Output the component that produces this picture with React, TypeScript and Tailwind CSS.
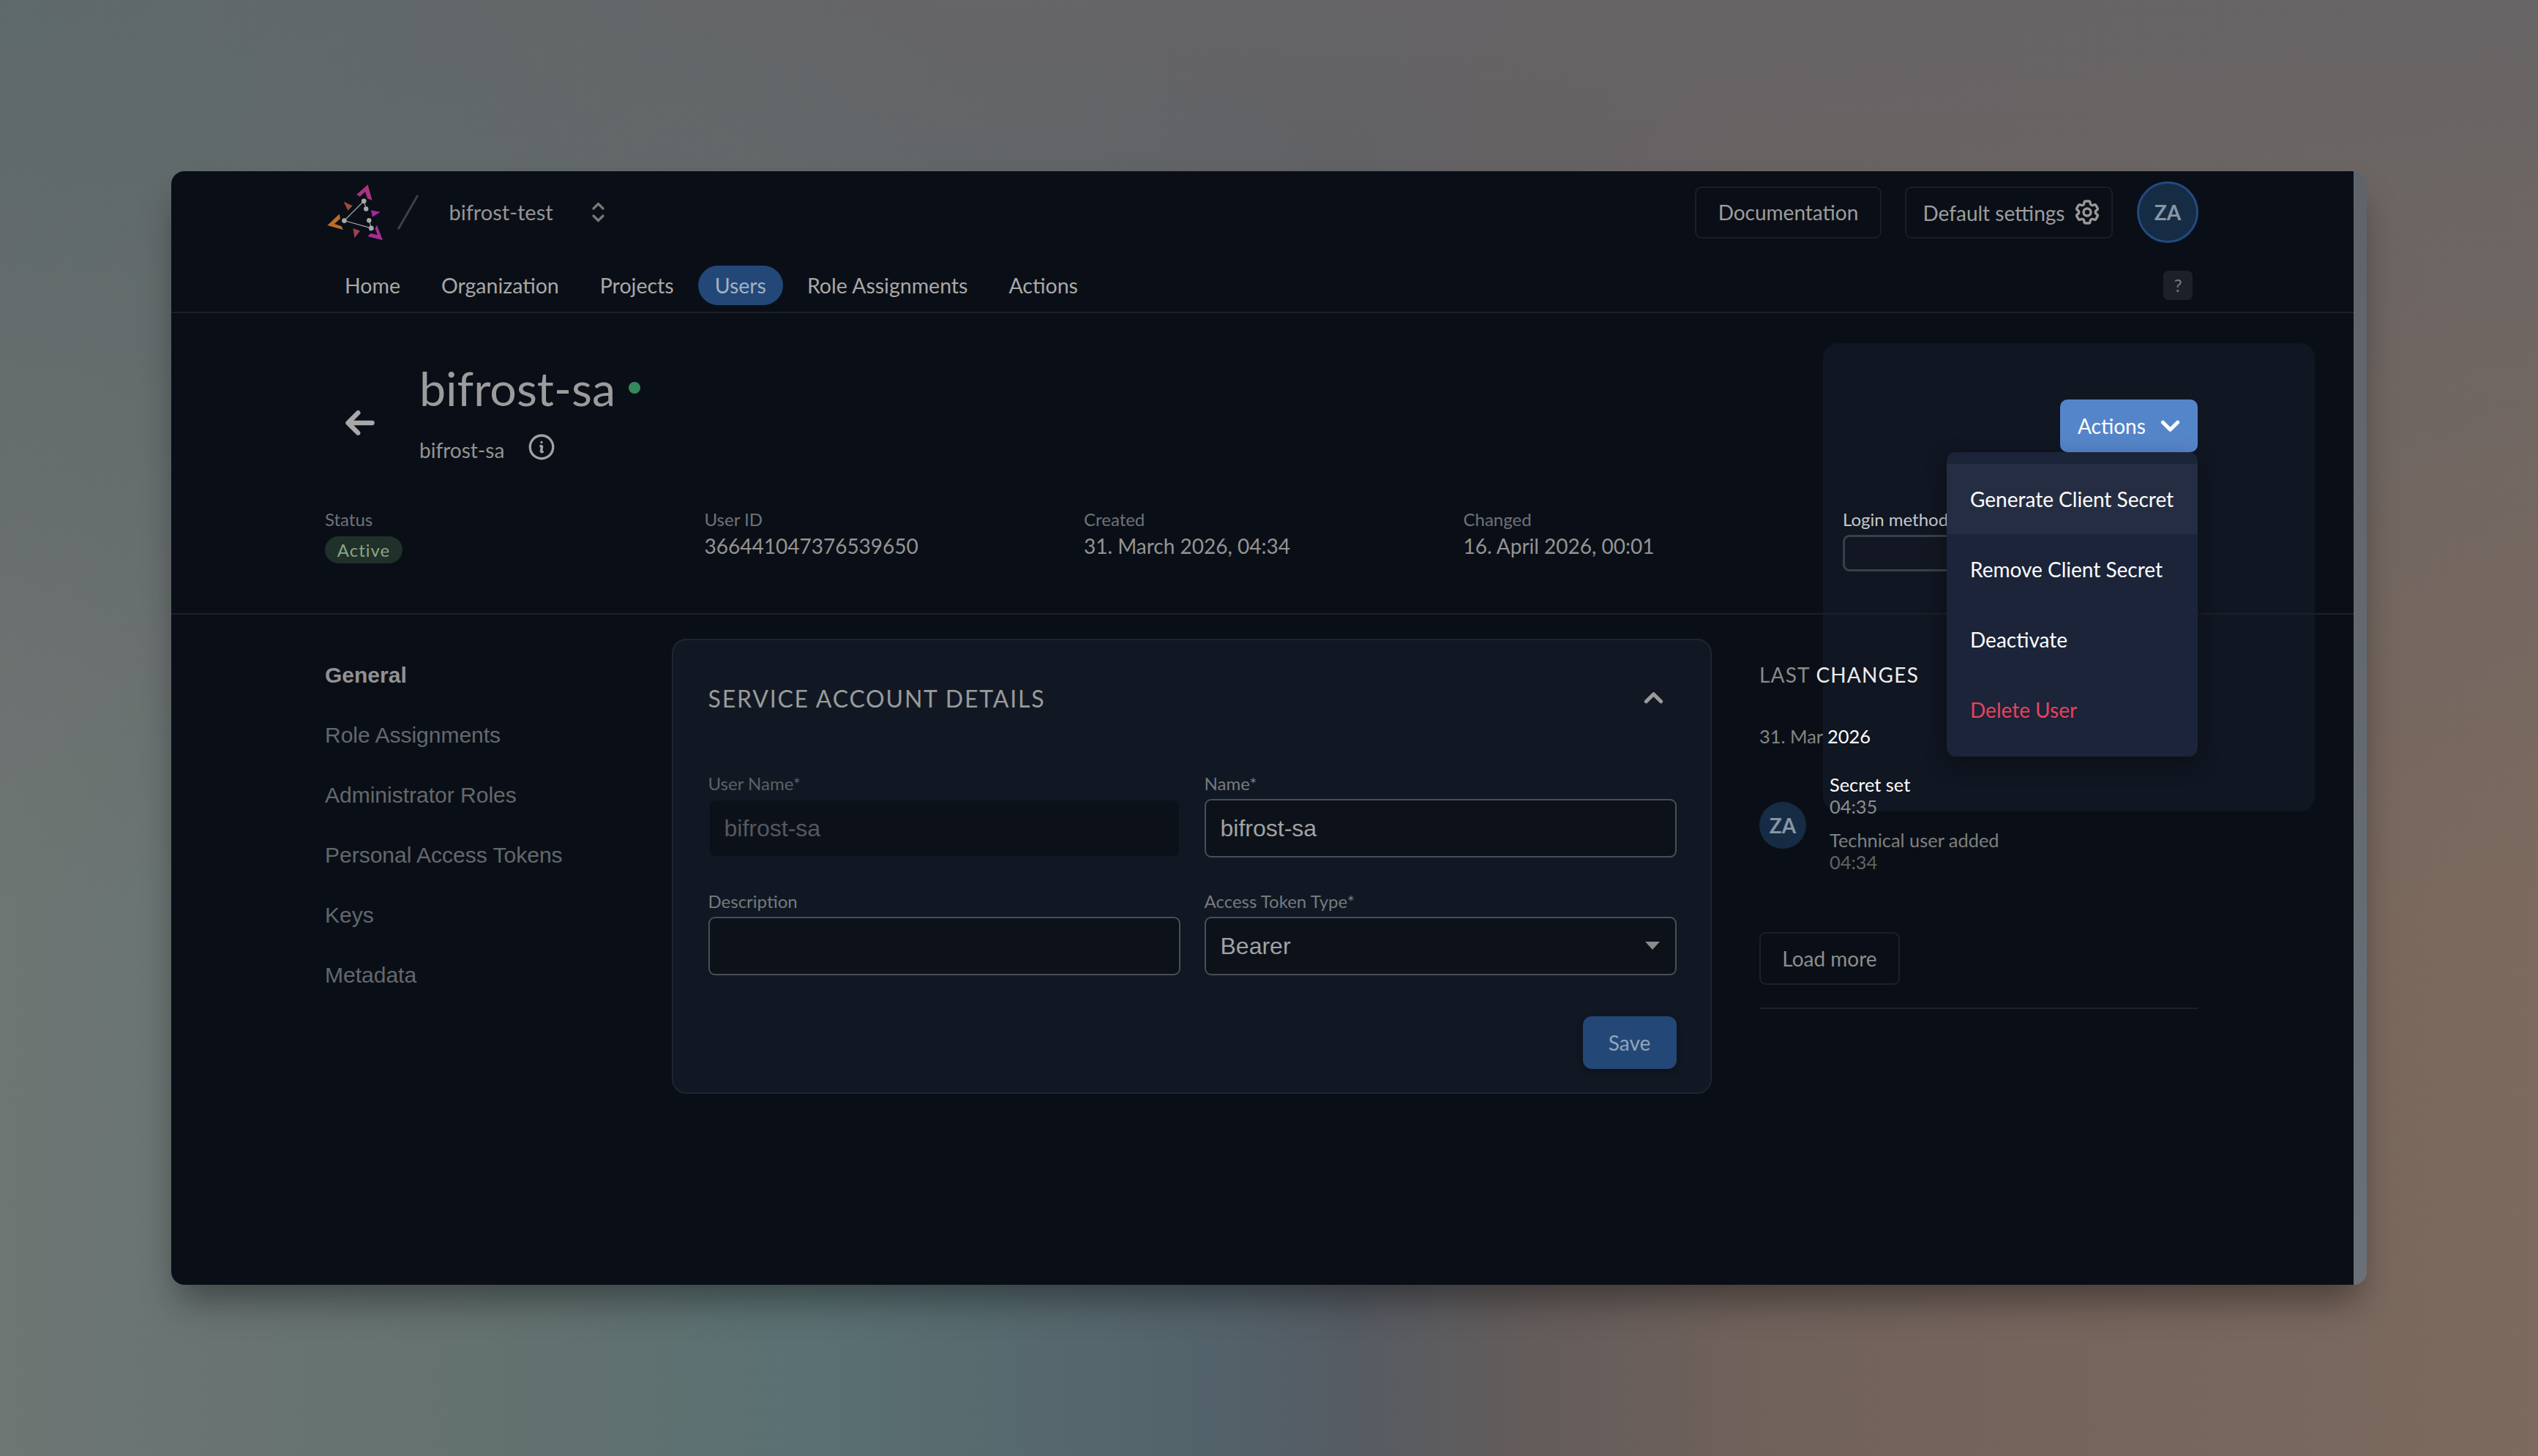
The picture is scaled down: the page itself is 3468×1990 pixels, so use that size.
import React from 'react';
import { HiOutlineCog6Tooth, HiOutlineInformationCircle, HiArrowLeft } from 'react-icons/hi2';

const lato = 'font-["Lato","Noto_Sans",sans-serif]';

function Logo() {
  return (
    <svg viewBox="78 65 230 230" className="w-[77px] h-[77px] shrink-0">
      <polygon points="198,107 244,66 262,130 243,123 233,95 212,115" fill="#a9347f" />
      <polygon points="145,135 182,152 163,172" fill="#9e4a3c" />
      <polygon points="128,186 79,232 143,250 137,236 108,226 132,205" fill="#bf6c2a" />
      <polygon points="184,245 212,255 190,284" fill="#a33f55" />
      <polygon points="281,231 305,293 243,277 256,265 284,272 274,246" fill="#a62e94" />
      <polygon points="257,170 295,178 263,198" fill="#a3289b" />
      <g stroke="#a9a9a9" strokeWidth="3.5" fill="none">
        <path d="M228 133 L148 213 L258 244 L249 212" />
        <path d="M228 133 L237 165" />
      </g>
      <g fill="#a9a9a9">
        <circle cx="228" cy="133" r="10" />
        <circle cx="237" cy="165" r="9.5" />
        <circle cx="148" cy="213" r="10" />
        <circle cx="249" cy="212" r="9.5" />
        <circle cx="258" cy="244" r="10" />
      </g>
    </svg>
  );
}

function UpDown() {
  return (
    <svg viewBox="0 0 17 28" className="w-[17px] h-[28px] ml-[53px] shrink-0" fill="none" stroke="#787878" strokeWidth="3.2" strokeLinecap="round" strokeLinejoin="round">
      <path d="M2 9 L8.5 2.5 L15 9" />
      <path d="M2 19 L8.5 25.5 L15 19" />
    </svg>
  );
}

function Chevron({ up, color, w }: { up?: boolean; color: string; w: string }) {
  return (
    <svg viewBox="0 0 25 16" className={w} fill="none" stroke={color} strokeWidth="4.8" strokeLinecap="round" strokeLinejoin="round">
      <path d={up ? 'M3 13 L12.5 3.5 L22 13' : 'M3 3 L12.5 12.5 L22 3'} />
    </svg>
  );
}

const navItems = ['Home', 'Organization', 'Projects', 'Users', 'Role Assignments', 'Actions'];
const sideItems = ['Role Assignments', 'Administrator Roles', 'Personal Access Tokens', 'Keys', 'Metadata'];

function Stat({ label, value }: { label: string; value: string }) {
  return (
    <div>
      <div className="text-[24px] leading-[36px] text-[#6f7277]">{label}</div>
      <div className="text-[28px] leading-[34px] mt-[1px] text-[#949494]">{value}</div>
    </div>
  );
}

function Field({ label, value, dim }: { label: string; value?: string; dim?: boolean }) {
  return (
    <div>
      <div className={`text-[24px] leading-[40px] h-[41px] ${dim ? 'text-[#5c6066]' : 'text-[#777a7e]'}`}>{label}</div>
      <input
        readOnly
        value={value ?? ''}
        className={`block w-full h-[80px] rounded-[9px] border-[2.5px] px-[20px] outline-none text-[32px] font-["Liberation_Sans",sans-serif] bg-clip-padding ${
          dim ? 'border-transparent bg-[#0c1119] text-[#55585d]' : 'border-[#4a4e54] bg-[#0c111a] text-[#a2a2a2]'
        }`}
      />
    </div>
  );
}

const menuItems = [
  { t: 'Generate Client Secret', cls: 'bg-[#252d42] text-white' },
  { t: 'Remove Client Secret', cls: 'text-white' },
  { t: 'Deactivate', cls: 'text-white' },
  { t: 'Delete User', cls: 'text-[#e8425a]' },
];

export default function App() {
  return (
    <div className={`w-full h-screen overflow-hidden pt-[234px] pl-[234px] ${lato} bg-[radial-gradient(ellipse_1300px_900px_at_0%_0%,rgba(90,108,110,0.65),rgba(90,108,110,0)),linear-gradient(180deg,rgba(102,100,102,0.95)_0%,rgba(102,100,102,0.7)_14%,rgba(102,100,102,0)_62%),linear-gradient(90deg,#6e7674_0%,#62716f_21%,#5a7072_32%,#53626a_48%,#555b63_53%,#635c5b_60%,#70615b_69%,#7c6a5e_100%)]`}>
      <div className="relative w-[3000px] h-[1522px] flex rounded-[18px] bg-[linear-gradient(180deg,#5f646b_0%,#6a7077_100%)] shadow-[0_30px_50px_-10px_rgba(0,0,0,0.4)]">
        <div className="relative w-[2982px] h-full rounded-l-[18px] bg-[#0a0f17] overflow-hidden">
          {/* Spotlight behind the open menu */}
          <div className="absolute left-[2257px] top-[235px] w-[672px] h-[640px] rounded-[20px] bg-[#101622]" />

          <div className="relative">
            <header className="h-[194px] border-b-[2px] border-[#1b1f28] pl-[210px] pr-[212px] pt-[14px]">
              <div className="flex items-center h-[84px]">
                <div className="ml-[3px] flex items-center">
                  <Logo />
                  <div className="w-[2.5px] h-[54px] ml-[32px] bg-[#3d4046] rotate-[30deg] rounded-full" />
                  <span className="ml-[55px] text-[29px] text-[#959595]">bifrost-test</span>
                  <UpDown />
                </div>
                <div className="ml-auto flex items-center">
                  <div className="h-[71px] w-[255px] flex items-center justify-center rounded-[9px] border-[2.5px] border-[#1a1e27] text-[28px] text-[#9d9d9d]">
                    Documentation
                  </div>
                  <div className="ml-[32px] h-[71px] w-[284px] flex items-center pl-[22.5px] gap-[11px] rounded-[9px] border-[2.5px] border-[#1a1e27] text-[28px] text-[#9d9d9d]">
                    <span className="mt-[2px]">Default settings</span>
                    <HiOutlineCog6Tooth strokeWidth={2} className="w-[40px] h-[40px] text-[#9a9a9a]" />
                  </div>
                  <div className="ml-[33px] w-[84px] h-[84px] rounded-full bg-[#152c44] border-[3.5px] border-[#234a80] flex items-center justify-center text-[28px] font-bold text-[#8796a6]">
                    ZA
                  </div>
                </div>
              </div>
              <div className="flex items-center mt-[31px] pl-[4px] pr-[8px]">
                <nav className="flex gap-[10px]">
                  {navItems.map((n) => (
                    <div
                      key={n}
                      className={`h-[54px] px-[23px] rounded-full flex items-center text-[28.5px] ${
                        n === 'Users' ? 'bg-[#234878] text-[#a1b1c4]' : 'text-[#a8a8a8]'
                      }`}
                    >
                      {n}
                    </div>
                  ))}
                </nav>
                <div className="ml-auto w-[40px] h-[40px] rounded-[7px] bg-[#1c2029] flex items-center justify-center text-[24px] text-[#7a7c80]">
                  ?
                </div>
              </div>
            </header>

            <section className="relative h-[412px] border-b-[2px] border-[#1c2029] pl-[210px] pr-[213px]">
              <div className="flex items-start">
                <HiArrowLeft strokeWidth={2} className="w-[44px] h-[44px] mt-[128px] ml-[26px] text-[#a8a8a8] shrink-0" />
                <div className="ml-[59px] mt-[60px]">
                  <div className="flex items-center">
                    <h1 className="text-[64.5px] leading-[84px] font-normal text-[#9c9c9c]">bifrost-sa</h1>
                    <span className="ml-[18px] mt-[0px] w-[16px] h-[16px] rounded-full bg-[#338a5c]" />
                  </div>
                  <div className="flex items-center mt-[22px]">
                    <span className="text-[28px] text-[#939393]">bifrost-sa</span>
                    <HiOutlineInformationCircle strokeWidth={1.9} className="ml-[30px] w-[42px] h-[42px] -mt-[8px] text-[#a2a2a2]" />
                  </div>
                </div>
                <div className="relative ml-auto mt-[118px]">
                  <button className="w-[188px] h-[72px] rounded-[10px] bg-[#5585c9] flex items-center pl-[24px] gap-[20px] text-[28px] text-white">
                    Actions
                    <Chevron color="#ffffff" w="w-[27px] h-[17px]" />
                  </button>
                  <div className="absolute z-20 right-0 top-[72px] w-[343px] py-[16px] rounded-[12px] bg-[#1b2439] shadow-[0_10px_30px_rgba(0,0,0,0.35)]">
                    {menuItems.map((m) => (
                      <div key={m.t} className={`h-[96px] px-[32px] flex items-center whitespace-nowrap text-[28px] ${m.cls}`}>
                        {m.t}
                      </div>
                    ))}
                  </div>
                </div>
              </div>

              <div className="absolute left-[210px] top-[264px] w-[2559px] grid grid-cols-5 gap-x-[33.5px]">
                <div>
                  <div className="text-[24px] leading-[36px] text-[#6f7277]">Status</div>
                  <div className="mt-[5px] w-[106px] h-[37px] rounded-full bg-[#20302a] flex items-center justify-center text-[24px] tracking-[1px] text-[#8aa583]">
                    Active
                  </div>
                </div>
                <Stat label="User ID" value="366441047376539650" />
                <Stat label="Created" value="31. March 2026, 04:34" />
                <Stat label="Changed" value="16. April 2026, 00:01" />
                <div>
                  <div className="text-[24px] leading-[36px] text-[#c8c8c8]">Login method</div>
                  <input readOnly className="block mt-[3px] w-full h-[50px] rounded-[9px] border-[3px] border-[#3a4049] bg-[#121723] outline-none" />
                </div>
              </div>
            </section>

            <main className="flex pl-[210px] pr-[212px] pt-[33px]">
              <aside className={`w-[474px] shrink-0 pt-[26px] font-["Liberation_Sans",sans-serif] text-[30px]`}>
                <div className="h-[82px] leading-[48px] font-bold text-[#929292]">General</div>
                {sideItems.map((s) => (
                  <div key={s} className="h-[82px] leading-[48px] text-[#64686d]">
                    {s}
                  </div>
                ))}
              </aside>

              <div className="w-[1421px] h-[622px] shrink-0 rounded-[20px] border-[2.5px] border-[#1f2530] bg-[#111823] pl-[47.5px] pr-[46.5px]">
                <div className="flex items-center justify-between h-[160px]">
                  <h2 className="text-[32px] font-normal tracking-[1.8px] text-[#9a9a9a]">SERVICE ACCOUNT DETAILS</h2>
                  <Chevron up color="#9a9a9a" w="w-[27px] h-[17px] mr-[18px] -mt-[3px]" />
                </div>
                <div className="grid grid-cols-2 gap-x-[33px] gap-y-[39.5px] mt-[16px]">
                  <Field label="User Name*" value="bifrost-sa" dim />
                  <Field label="Name*" value="bifrost-sa" />
                  <Field label="Description" />
                  <div>
                    <div className="text-[24px] leading-[40px] h-[41px] text-[#777a7e]">Access Token Type*</div>
                    <div className={`relative h-[80px] rounded-[9px] border-[2.5px] border-[#4a4e54] bg-[#0c111a] flex items-center justify-between pl-[20px] pr-[21px] text-[32px] font-["Liberation_Sans",sans-serif] text-[#a2a2a2]`}>
                      Bearer
                      <svg viewBox="0 0 20 11" className="w-[20px] h-[11px]">
                        <path d="M0 0 H20 L10 11 Z" fill="#8a8a8a" />
                      </svg>
                    </div>
                  </div>
                </div>
                <div className="flex justify-end mt-[56px]">
                  <button className="w-[128px] h-[72px] rounded-[12px] bg-[#234878] text-[28px] text-[#93a5b8] shadow-[0_4px_10px_rgba(0,0,0,0.3)]">Save</button>
                </div>
              </div>

              <div className="ml-[65px] w-[600px] shrink-0">
                <div className="mt-[29px] text-[28px] leading-[40px] tracking-[1.2px] text-[#8a8a8a]">
                  LAST <span className="text-[#eeeeee]">CHANGES</span>
                </div>
                <div className="mt-[44px] text-[25.4px] leading-[40px] text-[#848484]">
                  31. Mar <span className="text-white">2026</span>
                </div>
                <div className="flex items-center mt-[31px]">
                  <div className="w-[64px] h-[64px] mt-[5px] rounded-full bg-[#152c44] flex items-center justify-center text-[28px] font-bold text-[#8796a6]">ZA</div>
                  <div className="ml-[32px] text-[25.4px] leading-[30px]">
                    <div className="text-white">Secret set</div>
                    <div className="text-[#8d8d8d]">04:35</div>
                    <div className="mt-[16px] text-[#808080]">Technical user added</div>
                    <div className="text-[#636363]">04:34</div>
                  </div>
                </div>
                <div className="mt-[81px] w-[192px] h-[72px] rounded-[9px] border-[2.5px] border-[#1c2029] flex items-center justify-center text-[28px] text-[#8d8d8d]">
                  Load more
                </div>
                <div className="mt-[31px] h-[2px] bg-[#1c2029]" />
              </div>
            </main>
          </div>
        </div>
      </div>
    </div>
  );
}
